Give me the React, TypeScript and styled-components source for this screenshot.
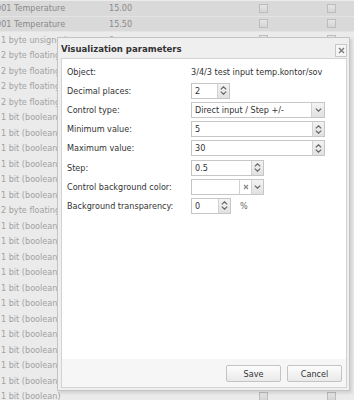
import React from "react";
import styled, { createGlobalStyle } from "styled-components";

const GlobalStyle = createGlobalStyle`
  html, body { margin: 0; padding: 0; }
  body { background: #ececec; }
`;

const Page = styled.div`
  position: relative;
  width: 354px;
  height: 400px;
  overflow: hidden;
  background: #ececec;
  font-family: "DejaVu Sans Condensed", "DejaVu Sans", sans-serif;
  font-size: 9px;
  color: #333;
`;

const List = styled.div`
  padding-top: 1px;
`;

const Row = styled.div<{ $active?: boolean }>`
  display: grid;
  grid-template-columns: 109px 148px 68px 1fr;
  align-items: center;
  height: 15.5px;
  background: ${(p) => (p.$active ? "#d9d9d9" : "#ebebeb")};
  color: ${(p) => (p.$active ? "#8a8a8a" : "#a2a2a2")};
  border-bottom: ${(p) => (p.$active ? "1px solid #e4e4e4" : "none")};
  box-sizing: border-box;
  white-space: nowrap;
`;

const Name = styled.span<{ $shift?: boolean }>`
  padding-left: 1px;
  margin-left: ${(p) => (p.$shift ? "-5px" : "0")};
  overflow: hidden;
`;

const Value = styled.span``;

const Check = styled.span`
  width: 9px;
  height: 9px;
  margin-left: 2px;
  border: 1px solid #bdbdbd;
  background: linear-gradient(#e6e6e6, #d4d4d4);
  box-sizing: border-box;
`;

const Dialog = styled.div`
  position: absolute;
  left: 57px;
  top: 37px;
  width: 293px;
  height: 354px;
  box-sizing: border-box;
  border: 1px solid #c4c4c4;
  background: #efefef;
  padding: 0 2px 2px 3px;
  display: flex;
  flex-direction: column;
  box-shadow: 2px 2px 3px rgba(0, 0, 0, 0.12);
`;

const TitleBar = styled.div`
  height: 20px;
  display: flex;
  align-items: center;
  justify-content: space-between;
  font-weight: bold;
  font-size: 9.5px;
  color: #333;
`;

const Close = styled.span`
  width: 12px;
  height: 13px;
  box-sizing: border-box;
  border: 1px solid #c8c8c8;
  background: #f6f6f6;
  display: flex;
  align-items: center;
  justify-content: center;
  margin-top: 5px;
  color: #777;
`;

const Inner = styled.div`
  flex: 1;
  border: 1px solid #d3d3d3;
  background: #fff;
  display: flex;
  flex-direction: column;
`;

const Form = styled.div`
  flex: 1;
  padding: 3px 0 0 5px;
  display: grid;
  grid-template-columns: 124px 1fr;
  grid-auto-rows: 19.2px;
  align-content: start;
  align-items: center;
`;

const Label = styled.span`
  color: #333;
`;

const Field = styled.div`
  display: flex;
  align-items: center;
  gap: 9px;
  color: #333;
`;

const Box = styled.div<{ $w: number }>`
  width: ${(p) => p.$w}px;
  height: 16px;
  box-sizing: border-box;
  border: 1px solid #c6c6c6;
  background: #fff;
  display: flex;
  align-items: stretch;
`;

const BoxText = styled.span`
  flex: 1;
  padding-left: 3px;
  line-height: 14px;
  color: #333;
`;

const SideBtn = styled.span<{ $w?: number; $plain?: boolean }>`
  width: ${(p) => p.$w ?? 11}px;
  display: flex;
  flex-direction: column;
  align-items: center;
  justify-content: center;
  gap: 1px;
  background: ${(p) => (p.$plain ? "#fff" : "linear-gradient(#f3f3f3, #e1e1e1)")};
  border-left: 1px solid #d2d2d2;
  color: #777;
`;

const Unit = styled.span`
  color: #666;
`;

const ButtonPane = styled.div`
  height: 28px;
  background: #f6f6f6;
  display: flex;
  justify-content: flex-end;
  align-items: flex-start;
  gap: 6px;
  padding: 6px 4px 0 0;
  box-sizing: border-box;
`;

const Button = styled.span`
  width: 55px;
  height: 17px;
  box-sizing: border-box;
  border: 1px solid #c3c3c3;
  border-radius: 2px;
  background: linear-gradient(#fdfdfd, #e9e9e9);
  display: flex;
  align-items: center;
  justify-content: center;
  color: #333;
`;

const Chevron = ({ up }: { up?: boolean }) => (
  <svg width="7" height="4" viewBox="0 0 7 4">
    <path
      d={up ? "M0.8 3.4 L3.5 0.8 L6.2 3.4" : "M0.8 0.6 L3.5 3.2 L6.2 0.6"}
      fill="none"
      stroke="#666"
      strokeWidth="1.2"
    />
  </svg>
);

const Spinner = ({ w, value }: { w: number; value: string }) => (
  <Box $w={w}>
    <BoxText>{value}</BoxText>
    <SideBtn>
      <Chevron up />
      <Chevron />
    </SideBtn>
  </Box>
);

const rows: { name: string; value?: string; active?: boolean; shift?: boolean }[] = [
  { name: "001 Temperature", value: "15.00", active: true, shift: true },
  { name: "001 Temperature", value: "15.50", active: true, shift: true },
  { name: "1 byte unsigned", value: "0" },
  ...Array(4).fill({ name: "2 byte floating point" }),
  ...Array(6).fill({ name: "1 bit (boolean)" }),
  { name: "2 byte floating point" },
  ...Array(12).fill({ name: "1 bit (boolean)" }),
];

export default function App() {
  return (
    <Page>
      <GlobalStyle />
      <List>
        {rows.map((r, i) => (
          <Row key={i} $active={r.active}>
            <Name $shift={r.shift}>{r.name}</Name>
            <Value>{r.value ?? ""}</Value>
            <Check />
            <Check />
          </Row>
        ))}
      </List>

      <Dialog>
        <TitleBar>
          <span>Visualization parameters</span>
          <Close>
            <svg width="7" height="7" viewBox="0 0 7 7">
              <path d="M1 1 L6 6 M6 1 L1 6" stroke="#777" strokeWidth="1.3" />
            </svg>
          </Close>
        </TitleBar>
        <Inner>
          <Form>
            <Label>Object:</Label>
            <Field>3/4/3 test input temp.kontor/sov</Field>

            <Label>Decimal places:</Label>
            <Field>
              <Spinner w={39} value="2" />
            </Field>

            <Label>Control type:</Label>
            <Field>
              <Box $w={134}>
                <BoxText>Direct input / Step +/-</BoxText>
                <SideBtn $w={12}>
                  <Chevron />
                </SideBtn>
              </Box>
            </Field>

            <Label>Minimum value:</Label>
            <Field>
              <Spinner w={134} value="5" />
            </Field>

            <Label>Maximum value:</Label>
            <Field>
              <Spinner w={134} value="30" />
            </Field>

            <Label>Step:</Label>
            <Field>
              <Spinner w={73} value="0.5" />
            </Field>

            <Label>Control background color:</Label>
            <Field>
              <Box $w={73}>
                <BoxText />
                <SideBtn $w={11} $plain>
                  <svg width="6" height="6" viewBox="0 0 6 6">
                    <path d="M1 1 L5 5 M5 1 L1 5" stroke="#888" strokeWidth="1.2" />
                  </svg>
                </SideBtn>
                <SideBtn $w={11}>
                  <Chevron />
                </SideBtn>
              </Box>
            </Field>

            <Label>Background transparency:</Label>
            <Field>
              <Spinner w={40} value="0" />
              <Unit>%</Unit>
            </Field>
          </Form>
          <ButtonPane>
            <Button>Save</Button>
            <Button>Cancel</Button>
          </ButtonPane>
        </Inner>
      </Dialog>
    </Page>
  );
}
